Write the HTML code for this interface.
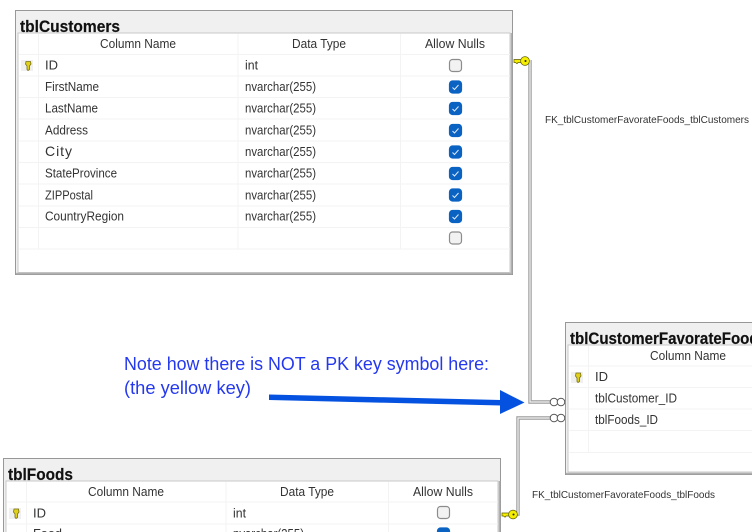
<!DOCTYPE html>
<html><head><meta charset="utf-8"><style>
html,body{margin:0;padding:0;background:#fff;width:752px;height:532px;overflow:hidden}
svg{display:block;filter:blur(.3px)}
text{font-family:"Liberation Sans",sans-serif;font-size:13px;fill:#333}
.t{font-size:16.500px;font-weight:bold;fill:#111;stroke:#111;stroke-width:.2}
.n{font-size:18px;fill:#2438ee}
.f{font-size:10.500px;fill:#333}
.g{stroke:#f3f3f3;stroke-width:1;fill:none}
.u{fill:#f2f2f2;stroke:#8c8c8c;stroke-width:1.200}
.c{fill:#0a62c2;stroke:#0a62c2;stroke-width:1.200}
.m{fill:none;stroke:#dfeafa;stroke-width:1}
.w{fill:none;stroke:#9a9a9a;stroke-width:3.400}
.w2{fill:none;stroke:#f4f4f4;stroke-width:1.200}
.k{fill:#f6ee00;stroke:#5c5c00;stroke-width:.7}
</style></head><body>
<svg width="752" height="532" viewBox="0 0 752 532" xmlns="http://www.w3.org/2000/svg">
<rect width="752" height="532" fill="#fff"/>

<!-- connectors -->
<path class="w" d="M530 60V402H551"/><path class="w2" d="M530 60V402H551"/>
<path class="w" d="M551 418H518V514H513"/><path class="w2" d="M551 418H518V514H513"/>
<g fill="#fff" stroke="#555" stroke-width="1">
<circle cx="554" cy="402" r="3.800"/><circle cx="561" cy="402" r="3.800"/>
<circle cx="554" cy="418" r="3.800"/><circle cx="561" cy="418" r="3.800"/>
</g>

<!-- tblCustomers -->
<g>
<rect x="15.500" y="10.500" width="497" height="264" fill="#f0f0f0" stroke="#989898"/>
<rect x="18" y="33" width="492" height="239.500" fill="#fff" stroke="#c8c8c8"/>
<path d="M16 273.500H512M511.500 33V274" stroke="#b0b0b0" stroke-width="1.500" fill="none"/>
<path class="g" d="M19 54.500H510M19 76H510M19 97.500H510M19 119H510M19 141H510M19 162.500H510M19 184H510M19 206H510M19 227.500H510M19 249H510M38.500 34V249M238 34V249M400.500 34V249"/>
<text class="t" x="20" y="32" textLength="100" lengthAdjust="spacingAndGlyphs">tblCustomers</text>
<text x="100" y="48" textLength="76" lengthAdjust="spacingAndGlyphs">Column Name</text>
<text x="292" y="48" textLength="54" lengthAdjust="spacingAndGlyphs">Data Type</text>
<text x="425" y="48" textLength="60" lengthAdjust="spacingAndGlyphs">Allow Nulls</text>
<rect x="21" y="60" width="12" height="11" fill="#f0f0f0"/>
<path d="M26 61.500H30.500L31 64L29.500 66V69.500L28 70.500L27 69.500V66L25.500 64Z" fill="#e2d11a" stroke="#77701a" stroke-width=".8"/>
<text x="45" y="69.500">ID</text>
<text x="45" y="91" textLength="54" lengthAdjust="spacingAndGlyphs">FirstName</text>
<text x="45" y="112.500" textLength="53" lengthAdjust="spacingAndGlyphs">LastName</text>
<text x="45" y="134.500" textLength="43" lengthAdjust="spacingAndGlyphs">Address</text>
<text x="45" y="156" style="font-size:14px" textLength="27" lengthAdjust="spacing">City</text>
<text x="45" y="177.500" textLength="72" lengthAdjust="spacingAndGlyphs">StateProvince</text>
<text x="45" y="199.500" textLength="48" lengthAdjust="spacingAndGlyphs">ZIPPostal</text>
<text x="45" y="220.500" textLength="79" lengthAdjust="spacingAndGlyphs">CountryRegion</text>
<text x="245" y="69.500" textLength="13" lengthAdjust="spacingAndGlyphs">int</text>
<text x="245" y="91" textLength="71" lengthAdjust="spacingAndGlyphs">nvarchar(255)</text>
<text x="245" y="112.500" textLength="71" lengthAdjust="spacingAndGlyphs">nvarchar(255)</text>
<text x="245" y="134.500" textLength="71" lengthAdjust="spacingAndGlyphs">nvarchar(255)</text>
<text x="245" y="156" textLength="71" lengthAdjust="spacingAndGlyphs">nvarchar(255)</text>
<text x="245" y="177.500" textLength="71" lengthAdjust="spacingAndGlyphs">nvarchar(255)</text>
<text x="245" y="199.500" textLength="71" lengthAdjust="spacingAndGlyphs">nvarchar(255)</text>
<text x="245" y="220.500" textLength="71" lengthAdjust="spacingAndGlyphs">nvarchar(255)</text>
<rect class="u" x="449.500" y="59.500" width="12" height="12" rx="3"/>
<rect class="c" x="449.500" y="81" width="12" height="12" rx="3"/><path class="m" d="M452.500 87.500L454.500 89.500L458.500 85"/>
<rect class="c" x="449.500" y="102.500" width="12" height="12" rx="3"/><path class="m" d="M452.500 109L454.500 111L458.500 106.500"/>
<rect class="c" x="449.500" y="124.500" width="12" height="12" rx="3"/><path class="m" d="M452.500 131L454.500 133L458.500 128.500"/>
<rect class="c" x="449.500" y="146" width="12" height="12" rx="3"/><path class="m" d="M452.500 152.500L454.500 154.500L458.500 150"/>
<rect class="c" x="449.500" y="167.500" width="12" height="12" rx="3"/><path class="m" d="M452.500 174L454.500 176L458.500 171.500"/>
<rect class="c" x="449.500" y="189" width="12" height="12" rx="3"/><path class="m" d="M452.500 195.500L454.500 197.500L458.500 193"/>
<rect class="c" x="449.500" y="210.500" width="12" height="12" rx="3"/><path class="m" d="M452.500 217L454.500 219L458.500 214.500"/>
<rect class="u" x="449.500" y="232" width="12" height="12" rx="3"/>
</g>

<!-- tblCustomerFavorateFoods -->
<g>
<rect x="565.500" y="322.500" width="300" height="152" fill="#f0f0f0" stroke="#989898"/>
<rect x="568" y="345" width="300" height="127" fill="#fff" stroke="#c8c8c8"/>
<path d="M566 473.500H760" stroke="#b0b0b0" stroke-width="1.500" fill="none"/>
<path class="g" d="M569 366H752M569 387.500H752M569 409H752M569 430.500H752M569 452.500H752M588.500 346V452"/>
<text class="t" x="570" y="344" textLength="197" lengthAdjust="spacingAndGlyphs">tblCustomerFavorateFoods</text>
<text x="650" y="360" textLength="76" lengthAdjust="spacingAndGlyphs">Column Name</text>
<rect x="571" y="372" width="12" height="11" fill="#f0f0f0"/>
<path d="M576 373H580.500L581 376L579.500 378V381.500L578 382.500L577 381.500V378L575.500 376Z" fill="#e2d11a" stroke="#77701a" stroke-width=".8"/>
<text x="595" y="381">ID</text>
<text x="595" y="402.500" textLength="82" lengthAdjust="spacingAndGlyphs">tblCustomer_ID</text>
<text x="595" y="424" textLength="63" lengthAdjust="spacingAndGlyphs">tblFoods_ID</text>
</g>

<!-- tblFoods -->
<g>
<rect x="3.500" y="458.500" width="497" height="90" fill="#f0f0f0" stroke="#989898"/>
<rect x="6" y="481" width="492" height="70" fill="#fff" stroke="#c8c8c8"/>
<path d="M499.500 481V540" stroke="#b0b0b0" stroke-width="1.500" fill="none"/>
<path class="g" d="M7 502H498M7 524H498M26.500 482V532M226 482V532M388.500 482V532"/>
<text class="t" x="8" y="480" textLength="65" lengthAdjust="spacingAndGlyphs">tblFoods</text>
<text x="88" y="496" textLength="76" lengthAdjust="spacingAndGlyphs">Column Name</text>
<text x="280" y="496" textLength="54" lengthAdjust="spacingAndGlyphs">Data Type</text>
<text x="413" y="496" textLength="60" lengthAdjust="spacingAndGlyphs">Allow Nulls</text>
<rect x="9" y="508" width="12" height="11" fill="#f0f0f0"/>
<path d="M14 509H18.500L19 512L17.500 514V517.500L16 518.500L15 517.500V514L13.500 512Z" fill="#e2d11a" stroke="#77701a" stroke-width=".8"/>
<text x="33" y="517.500">ID</text>
<text x="33" y="538" textLength="29" lengthAdjust="spacingAndGlyphs">Food</text>
<text x="233" y="517.500" textLength="13" lengthAdjust="spacingAndGlyphs">int</text>
<text x="233" y="538" textLength="71" lengthAdjust="spacingAndGlyphs">nvarchar(255)</text>
<rect class="u" x="437.500" y="506.500" width="12" height="12" rx="3"/>
<rect class="c" x="437.500" y="528" width="12" height="12" rx="3"/>
</g>

<!-- keys on connectors -->
<path class="k" d="M514 59.500H522V62.500H518L517 63.800L515.500 62.500H514Z"/>
<circle class="k" cx="525" cy="61" r="4.400"/>
<circle cx="525.500" cy="61" r="1" fill="#222"/>
<path class="k" d="M502 513H510V516H506L505 517.300L503.500 516H502Z"/>
<circle class="k" cx="513" cy="514.500" r="4.400"/>
<circle cx="513.500" cy="514.500" r="1" fill="#222"/>

<!-- labels -->
<text class="f" x="545" y="123" textLength="204" lengthAdjust="spacingAndGlyphs">FK_tblCustomerFavorateFoods_tblCustomers</text>
<text class="f" x="532" y="498" textLength="183" lengthAdjust="spacingAndGlyphs">FK_tblCustomerFavorateFoods_tblFoods</text>
<text class="n" x="124" y="370" textLength="365" lengthAdjust="spacingAndGlyphs">Note how there is NOT a PK key symbol here:</text>
<text class="n" x="124" y="394" textLength="127" lengthAdjust="spacingAndGlyphs">(the yellow key)</text>

<!-- arrow -->
<path d="M269 394.500L501 400V405.500L269 400Z" fill="#0552e0"/>
<path d="M500 390L524.500 402.500L500 414Z" fill="#0552e0"/>
</svg>
</body></html>
